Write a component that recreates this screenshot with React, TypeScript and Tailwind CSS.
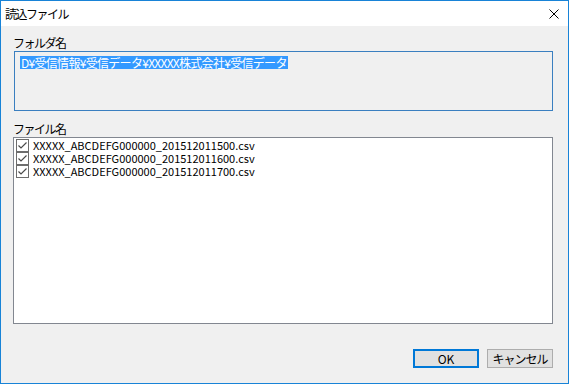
import React from "react";

const files = [
  "XXXXX_ABCDEFG000000_201512011500.csv",
  "XXXXX_ABCDEFG000000_201512011600.csv",
  "XXXXX_ABCDEFG000000_201512011700.csv",
];

function CheckBox() {
  return (
    <svg width="13" height="13" viewBox="0 0 13 13" className="shrink-0">
      <rect x="0.5" y="0.5" width="12" height="12" fill="#ffffff" stroke="#6d6d6d" />
      <path d="M2.5 6.5 L5 9 L10.5 3.5" fill="none" stroke="#4a4a4a" strokeWidth="1.2" />
    </svg>
  );
}

export default function App() {
  return (
    <div className="w-[569px] h-[384px] border border-[#1883d7] bg-[#f0f0f0] flex flex-col text-[12px] text-black font-['Noto_Sans_CJK_JP',sans-serif]">
      {/* title bar */}
      <div className="h-[25px] bg-white flex items-center justify-between pl-[4px] pr-[9px]">
        <span className="leading-[16px] tracking-[-1.5px]">読込ファイル</span>
        <svg width="10" height="10" viewBox="0 0 10 10">
          <path d="M0.5 0.5 L9.5 9.5 M9.5 0.5 L0.5 9.5" stroke="#000" strokeWidth="1" />
        </svg>
      </div>

      <div className="flex flex-col pl-[12px] pt-[9px]">
        <div className="leading-[16px] h-[16px] tracking-[-1.5px]">フォルダ名</div>
        <div className="ml-[1px] w-[539px] h-[60px] border border-[#3a7fc0] bg-[#f0f0f0] pl-[5px] pt-[2px]">
          <span className="inline-block h-[13px] leading-[13px] bg-[#3399ff] text-white px-[1px] tracking-[-0.7px]">
            D¥受信情報¥受信データ¥XXXXX株式会社¥受信データ
          </span>
        </div>

        <div className="mt-[10px] leading-[16px] h-[16px] tracking-[-1.5px]">ファイル名</div>
        <div className="w-[540px] h-[187px] border border-[#828790] bg-white pt-[1px] pl-[2px]">
          {files.map((f) => (
            <div key={f} className="h-[13px] flex items-center gap-[4px]">
              <CheckBox />
              <span className="leading-[13px] text-[11px]">{f}</span>
            </div>
          ))}
        </div>

        <div className="w-[540px] mt-[25px] flex justify-end gap-[8px]">
          <button className="w-[66px] h-[19px] border-2 border-[#0078d7] bg-[#e1e1e1] leading-[15px] text-[12px]">
            OK
          </button>
          <button className="w-[66px] h-[19px] border border-[#adadad] bg-[#e1e1e1] leading-[17px] text-[12px] tracking-[-1px]">
            キャンセル
          </button>
        </div>
      </div>
    </div>
  );
}
